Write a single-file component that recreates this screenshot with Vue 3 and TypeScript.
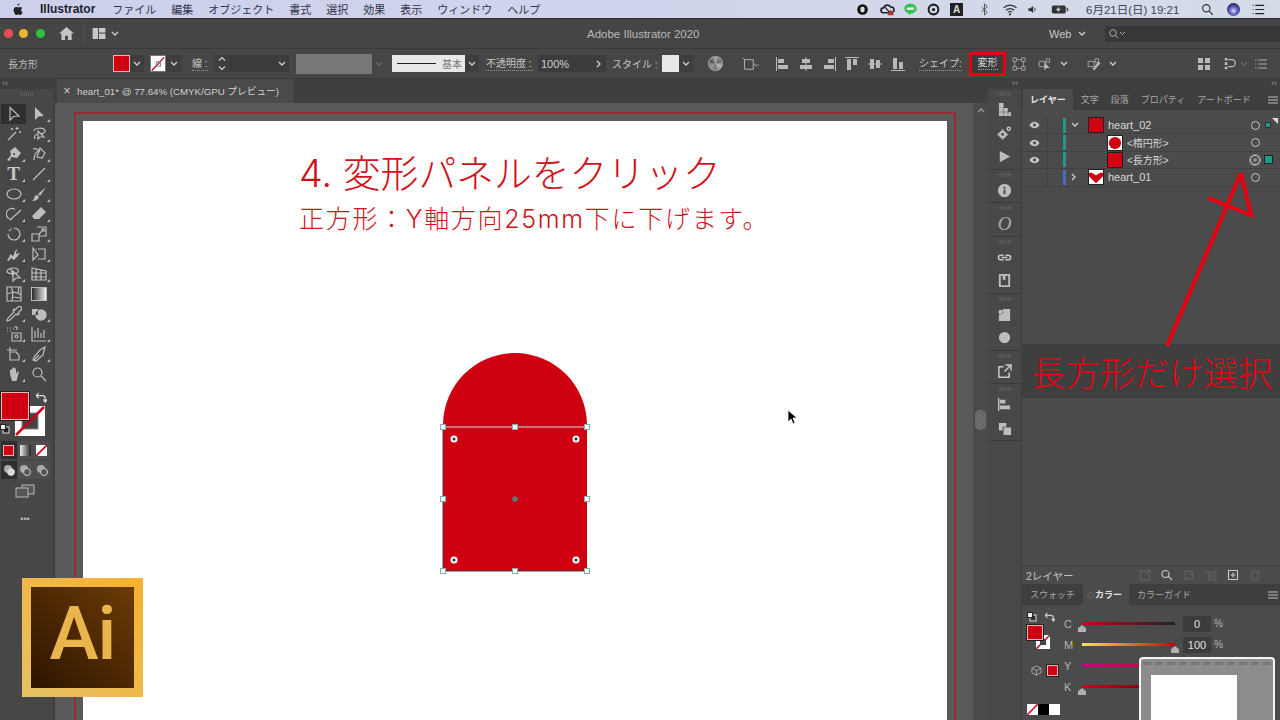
<template>
  <div class="screen">
    <header class="menubar">
      <svg class="apple" viewBox="0 0 14 16"><path d="M9.6 0.5c.1 1.4-1.2 3-2.7 2.9C6.700 2 8.100.6 9.600.5zM11.600 8.500c0-1.600 1.300-2.400 1.400-2.500-.8-1.100-2-1.300-2.500-1.300-1-.1-2 .6-2.600.6-.5 0-1.400-.6-2.300-.6C4.300 4.700 3.200 5.400 2.600 6.400 1.400 8.500 2.300 11.600 3.500 13.300c.6.800 1.300 1.800 2.200 1.700.9 0 1.200-.6 2.300-.6s1.400.6 2.300.6c1 0 1.600-.8 2.200-1.700.7-1 1-2 1-2-.1 0-1.900-.7-1.900-2.800z"/></svg>
      <b class="app-name">Illustrator</b>
      <nav class="menus">
        <span v-for="m in menus" :key="m">{{ m }}</span>
      </nav>
      <div class="status">
        <svg viewBox="0 0 16 16" class="st"><circle cx="8" cy="8" r="6.500" fill="#111"/><rect x="5.500" y="4.500" width="5" height="7" rx="2" fill="#ddd"/></svg>
        <svg viewBox="0 0 20 16" class="st wide"><path d="M5 12a3 3 0 0 1 0-6 5 5 0 0 1 9-1 3.500 3.500 0 0 1 1 7z" fill="none" stroke="#222" stroke-width="2"/><path d="M7 5l6 7" stroke="#222" stroke-width="1.500"/><path d="M14 8l4 7h-8z" fill="#c8302a"/></svg>
        <svg viewBox="0 0 16 16" class="st"><path d="M8 1c4 0 7.500 2.500 7.500 6 0 3.200-3 5.600-6.500 6l-2.500 2v-2C3.500 12.500.5 10.200.5 7 .5 3.500 4 1 8 1z" fill="#2fc14b"/><rect x="3.500" y="5.500" width="9" height="3" fill="#e8f7e8"/></svg>
        <svg viewBox="0 0 16 16" class="st"><circle cx="8" cy="8" r="6" fill="none" stroke="#222" stroke-width="2.500"/><circle cx="8" cy="8" r="2" fill="#222"/></svg>
        <span class="st-a">A</span>
        <svg viewBox="0 0 16 16" class="st dim"><path d="M8 1v14M8 1l3.500 3.500L4.500 11M8 15l3.500-3.500L4.500 5" fill="none" stroke="#555" stroke-width="1.200"/></svg>
        <svg viewBox="0 0 18 16" class="st wide-s"><path d="M1 6a11 11 0 0 1 16 0M4 9a7 7 0 0 1 10 0M6.500 11.500a3.500 3.500 0 0 1 5 0" fill="none" stroke="#333" stroke-width="1.500"/><circle cx="9" cy="14" r="1.300" fill="#333"/></svg>
        <svg viewBox="0 0 16 16" class="st small"><path d="M2 6h3l4-3v10l-4-3H2z" fill="#333"/><path d="M11 5.500a4 4 0 0 1 0 5" fill="none" stroke="#333" stroke-width="1.300"/></svg>
        <svg viewBox="0 0 22 14" class="st batt"><rect x="1" y="2" width="17" height="10" rx="2" fill="#333"/><rect x="19" y="5" width="2" height="4" fill="#555"/><path d="M10 3L6 8h3l-1 3 4-5H9z" fill="#ddd"/></svg>
        <span class="clock">6月21日(日) 19:21</span>
        <svg viewBox="0 0 16 16" class="st search"><circle cx="6.500" cy="6.500" r="4.500" fill="none" stroke="#333" stroke-width="1.400"/><path d="M10 10l4.500 4.500" stroke="#333" stroke-width="1.500"/></svg>
        <span class="siri"></span>
        <svg viewBox="0 0 16 16" class="st list"><path d="M4 3h11M4 8h11M4 13h11" stroke="#222" stroke-width="1.500"/><path d="M1 3h1M1 8h1M1 13h1" stroke="#222" stroke-width="1.500"/></svg>
      </div>
    </header>

    <div class="titlebar">
      <i class="light red"></i><i class="light yellow"></i><i class="light green"></i>
      <svg class="home" viewBox="0 0 16 14"><path d="M8 0L0 7h2.500v7h4V9.500h3V14h4V7H16z"/></svg>
      <span class="sep"></span>
      <svg class="layout" viewBox="0 0 14 12"><path d="M0 0h6v12H0zM7 0h7v5H7zM7 6h7v6H7z"/></svg>
      <svg class="chev ml-5" viewBox="0 0 8 6"><path d="M1 1l3 3 3-3"/></svg>
      <span class="doc-title">Adobe Illustrator 2020</span>
      <span class="web">Web</span>
      <svg class="chev ml-7" viewBox="0 0 8 6"><path d="M1 1l3 3 3-3"/></svg>
      <div class="search-box">
        <svg viewBox="0 0 18 12"><circle cx="5" cy="5" r="3.300" fill="none" stroke="#aaa"/><path d="M7.500 7.500L10 10M12 4l2.500 2.500L17 4" fill="none" stroke="#aaa"/></svg>
      </div>
    </div>

    <div class="controlbar">
      <span class="obj-name">長方形</span>
      <span class="swatch fill"></span><span class="cbox"><svg class="chev" viewBox="0 0 8 6"><path d="M1 1l3 3 3-3"/></svg></span>
      <span class="swatch none ml-6"><svg viewBox="0 0 16 16"><path d="M1 16L15 1" stroke="#c8001a" stroke-width="1.500"/><rect x="6" y="6" width="5" height="5" fill="none" stroke="#777"/></svg></span><span class="cbox wide"><svg class="chev" viewBox="0 0 8 6"><path d="M1 1l3 3 3-3"/></svg></span>
      <span class="lbl stroke-l ml-11">線 :</span>
      <span class="spin ml-6"><svg viewBox="0 0 10 16"><path d="M2 5l3-3 3 3M2 11l3 3 3-3" fill="none" stroke="#ccc" stroke-width="1.200"/></svg></span>
      <span class="field weight"><svg class="chev" viewBox="0 0 8 6"><path d="M1 1l3 3 3-3"/></svg></span>
      <span class="graybar ml-7"></span><span class="cbox faded"><svg class="chev" viewBox="0 0 8 6"><path d="M1 1l3 3 3-3"/></svg></span>
      <span class="stroke-preview ml-6"><i></i><em>基本</em></span><span class="cbox"><svg class="chev" viewBox="0 0 8 6"><path d="M1 1l3 3 3-3"/></svg></span>
      <span class="lbl opacity-l ml-7">不透明度 :</span>
      <span class="field opacity ml-5">100%</span><span class="cbox"><svg class="chev right" viewBox="0 0 6 8"><path d="M1 1l3 3-3 3"/></svg></span>
      <span class="style-l ml-6">スタイル :</span>
      <span class="swatch blank"></span><span class="cbox"><svg class="chev" viewBox="0 0 8 6"><path d="M1 1l3 3 3-3"/></svg></span>
      <span class="globe"></span>
      <svg class="ci select-i" viewBox="0 0 22 16"><path d="M3 3h10v11H3zM1 1l3 3M14 8l2.500 2.500L19 8" fill="none" stroke="#bbb"/></svg>
      <div class="aligns">
        <svg v-for="(a, i) in aligns" :key="i" class="ci" viewBox="0 0 14 14"><path :d="a"/></svg>
      </div>
      <span class="lbl shape-l">シェイプ:</span>
      <span class="transform-btn"><span>変形</span></span>
      <svg class="ci ml-6" viewBox="0 0 16 16"><path d="M1 1h4v4H1zM11 1h4v4h-4zM1 11h4v4H1zM11 11h4v4h-4zM5 3h6M5 13h6M3 5v6M13 5v6" fill="none" stroke="#aaa"/></svg>
      <svg class="ci w20 ml-11" viewBox="0 0 20 16"><path d="M1 5h7v6H1zM9 2h4v4H9z" fill="none" stroke="#aaa"/><path d="M7 6v9l2.500-2.500H13z" fill="#bbb"/></svg>
      <svg class="chev ml-3" viewBox="0 0 8 6"><path d="M1 1l3 3 3-3"/></svg>
      <svg class="ci w20 ml-18" viewBox="0 0 20 16"><path d="M1 5h7v6H1zM9 2h4v4H9z" fill="none" stroke="#aaa"/><path d="M6 14l7-9 2 2-7 8z" fill="#bbb"/></svg>
      <svg class="chev ml-3" viewBox="0 0 8 6"><path d="M1 1l3 3 3-3"/></svg>
      <svg class="ci ctrl-right" viewBox="0 0 14 14"><path d="M1 1h5v5H1zM8 1h5v5H8zM1 8h5v5H1zM8 8h5v5H8z" fill="#bbb"/></svg>
      <svg class="ci ml-12" viewBox="0 0 14 16"><path d="M1 1h3v3H1zM1 6h3v3H1zM1 11h3v3H1z" fill="#bbb"/><path d="M5 3h4a4 4 0 0 1 0 8H5" fill="none" stroke="#bbb" stroke-width="1.500"/></svg>
      <svg class="chev faint ml-3" viewBox="0 0 8 6"><path d="M1 1l3 3 3-3"/></svg>
      <svg class="ci ml-7 mini" viewBox="0 0 12 12"><path d="M3 2h9M3 6h9M3 10h9M0 2h1.500M0 6h1.500M0 10h1.500" stroke="#aaa" stroke-width="1.200"/></svg>
    </div>

    <div class="workspace">
      <aside class="tools">
        <div class="strip">‹‹</div>
        <div class="grip"></div>
        <div class="tool-grid">
          <div v-for="(t, i) in tools" :key="i" class="tool" :class="{ active: i === 0 }">
            <span v-if="t.grad" class="grad-icon"></span>
            <span v-else-if="t.txt" class="t-icon">{{ t.txt }}</span>
            <svg v-else viewBox="0 0 16 16"><path :d="t.d" :class="t.f ? 'solid' : 'line'"/></svg>
            <i v-if="t.m" class="more"></i>
          </div>
        </div>
        <div class="color-well">
          <span class="well-stroke"><svg viewBox="0 0 30 30"><rect x="7" y="7" width="16" height="16" fill="#444" stroke="#888"/><path d="M1 29L29 1" stroke="#c8001a" stroke-width="2.500"/></svg></span>
          <span class="well-fill"></span>
          <svg class="well-swap" viewBox="0 0 12 12"><path d="M1 4h6a3 3 0 0 1 3 3v3M8 8l2 3 2-3M3 1L0 4l3 3" fill="none" stroke="#ddd" stroke-width="1.300"/></svg>
          <svg class="well-default" viewBox="0 0 10 10"><rect x="3" y="3" width="6" height="6" fill="#222" stroke="#ddd"/><rect x="0.500" y="0.500" width="5" height="5" fill="#eee" stroke="#222"/></svg>
        </div>
        <div class="mode-row">
          <span class="m-cell on"><i class="m-red"></i></span>
          <span class="m-cell"><i class="m-grad"></i></span>
          <span class="m-cell"><i class="m-none"><svg viewBox="0 0 10 10"><path d="M0 10L10 0" stroke="#c8001a" stroke-width="1.500"/></svg></i></span>
        </div>
        <div class="mode-row draw">
          <span v-for="n in 3" :key="n" class="m-cell" :class="{ on: n === 1 }">
            <svg viewBox="0 0 12 12"><circle cx="5" cy="5" r="4" fill="#aaa"/><circle cx="8" cy="8" r="3.500" :fill="n === 1 ? '#ddd' : '#555'" stroke="#ccc"/></svg>
          </span>
        </div>
        <svg class="screen-mode" viewBox="0 0 20 14"><rect x="7" y="1" width="12" height="9" fill="#555" stroke="#bbb"/><rect x="1" y="4" width="12" height="9" fill="#555" stroke="#bbb"/></svg>
        <div class="dots">•••</div>
      </aside>

      <main class="doc">
        <div class="tabrow">
          <div class="tab"><span class="x">×</span>heart_01* @ 77.64% (CMYK/GPU プレビュー)</div>
        </div>
        <div class="canvas-wrap">
          <div class="canvas">
            <div class="bleed">
              <div class="artboard">
                <h1>4. 変形パネルをクリック</h1>
                <h2>正方形：Y軸方向25mm下に下げます。</h2>
                <svg class="arch" viewBox="0 0 154 224">
                  <path d="M3 73a72 72 0 0 1 144 0V219H3z" fill="#cf0012"/>
                  <path d="M3 75V219H147" fill="none" stroke="#3c4a48" stroke-width="1"/>
                  <path d="M3 75H147" stroke="#d9d9d9" stroke-width="1"/>
                  <g fill="#fff" stroke="#7fb0a8">
                    <rect v-for="(h, i) in handles" :key="i" :x="h[0] - 2.500" :y="h[1] - 2.500" width="5" height="5"/>
                  </g>
                  <g v-for="(c, i) in corners" :key="'c' + i">
                    <circle :cx="c[0]" :cy="c[1]" r="3.500" fill="#fff"/>
                    <circle :cx="c[0]" :cy="c[1]" r="1.500" fill="#333"/>
                  </g>
                  <circle cx="75" cy="147" r="2.800" fill="#5c7a70"/>
                </svg>
                <svg class="cursor" viewBox="0 0 10 16"><path d="M1 1v12l3-3 2 5 2-1-2-5h4z" fill="#000" stroke="#fff" stroke-width="0.800"/></svg>
              </div>
            </div>
          </div>
          <div class="scrollbar"><svg class="chev up" viewBox="0 0 8 6"><path d="M1 4l3-3 3 3"/></svg><i></i></div>
        </div>
      </main>

      <aside class="dock">
        <div class="strip right">‹‹</div>
        <div v-for="(g, i) in dockGroups" :key="i" class="dock-group">
          <div class="grip"></div>
          <div v-for="(ic, j) in g" :key="j" class="dock-icon">
            <span v-if="ic.txt" class="dock-o">{{ ic.txt }}</span>
            <svg v-else viewBox="0 0 16 16"><path :d="ic.d" :class="ic.f ? 'solid' : 'line wide-line'"/></svg>
          </div>
        </div>
      </aside>

      <section class="panels">
        <div class="strip right">››</div>
        <div class="ptabs">
          <span class="ptab on">レイヤー</span>
          <span class="ptab">文字</span>
          <span class="ptab">段落</span>
          <span class="ptab">プロパティ</span>
          <span class="ptab">アートボード</span>
          <svg class="burger" viewBox="0 0 10 8"><path d="M0 1h10M0 4h10M0 7h10" stroke="#bbb"/></svg>
        </div>
        <div class="layers">
          <div v-for="l in layers" :key="l.name" class="row">
            <span class="eye"><svg viewBox="0 0 12 8"><path d="M0.500 4C2 1.500 4 .5 6 .5s4 1 5.500 3.500C10 6.500 8 7.500 6 7.500S2 6.500.5 4z" fill="#c4c4c4"/><circle cx="6" cy="4" r="1.600" fill="#444"/></svg></span>
            <span class="lockcol"></span>
            <span class="tag" :class="l.tag"></span>
            <span class="twirl">
              <svg v-if="l.open === true" class="chev" viewBox="0 0 8 6"><path d="M1 1l3 3 3-3"/></svg>
              <svg v-else-if="l.open === false" class="chev right" viewBox="0 0 6 8"><path d="M1 1l3 3-3 3"/></svg>
            </span>
            <span class="thumb" :class="{ sub: l.sub }">
              <svg viewBox="0 0 16 16">
                <rect width="16" height="16" :fill="l.kind === 'rect' ? '#cf0012' : '#fff'"/>
                <circle v-if="l.kind === 'circle'" cx="8" cy="8" r="7" fill="#cf0012"/>
                <path v-if="l.kind === 'heart'" d="M8 15L0 7V3h3l5 3 5-3h3v4z" fill="#cf0012"/>
              </svg>
            </span>
            <span class="lname" :class="{ sub: l.sub }">{{ l.name }}</span>
            <span class="target" :class="{ hit: l.hit }"><i></i></span>
            <span class="sel" :class="{ big: l.hit, small: l.open === true }"></span>
          </div>
          <i class="corner"></i>
        </div>
        <div class="layers-foot">
          <span class="lcount">2レイヤー</span>
          <svg v-for="(f, i) in footIcons" :key="i" viewBox="0 0 12 12" :class="{ lit: f.lit }"><path :d="f.d" fill="none" stroke="currentColor" stroke-width="1.100"/></svg>
        </div>
        <div class="ptabs color-tabs">
          <span class="ptab">スウォッチ</span>
          <span class="ptab on"><small>◇</small>カラー</span>
          <span class="ptab">カラーガイド</span>
          <svg class="burger" viewBox="0 0 10 8"><path d="M0 1h10M0 4h10M0 7h10" stroke="#bbb"/></svg>
        </div>
        <div class="color-body">
          <div class="color-left">
            <div class="swap-icons">
              <svg viewBox="0 0 10 10"><rect x="3" y="3" width="6" height="6" fill="#333" stroke="#ddd"/><rect x="0.500" y="0.500" width="5" height="5" fill="#eee" stroke="#222"/></svg>
              <svg viewBox="0 0 12 12"><path d="M1 4h6a3 3 0 0 1 3 3v3M8 8l2 3 2-3M3 1L0 4l3 3" fill="none" stroke="#ccc" stroke-width="1.300"/></svg>
            </div>
            <div class="mini-well"><span class="mw-stroke"><svg viewBox="0 0 14 14"><path d="M0 14L14 0" stroke="#c8001a" stroke-width="1.500"/><rect x="4" y="4" width="6" height="6" fill="#444"/></svg></span><span class="mw-fill"></span></div>
            <div class="gamut">
              <svg viewBox="0 0 12 12"><path d="M6 1l5 2.500v5L6 11 1 8.500v-5zM1 3.500L6 6l5-2.500M6 6v5" fill="none" stroke="#aaa"/></svg>
              <span class="gamut-swatch"></span>
            </div>
            <div class="quick"><i class="qn"><svg viewBox="0 0 11 11"><path d="M0 11L11 0" stroke="#c8001a" stroke-width="1.500"/></svg></i><i class="qb"></i><i class="qw"></i></div>
          </div>
          <div class="sliders">
            <div v-for="s in sliders" :key="s.k" class="slider">
              <span class="s-key">{{ s.k }}</span>
              <span class="track" :class="s.k"><i v-if="s.pos !== null" class="knob" :class="{ end: s.pos === 100 }"></i></span>
              <template v-if="s.val !== null">
                <span class="s-val">{{ s.val }}</span><span class="pct">%</span>
              </template>
            </div>
          </div>
        </div>
      </section>
    </div>

    <!-- overlays added over the recording -->
    <div class="ai-logo"><span>Ai</span></div>
    <div class="callout">長方形だけ選択</div>
    <svg class="arrow" viewBox="0 0 120 180"><path d="M4 176L78 3M78 3L88 45L45 28" fill="none" stroke="#e60012" stroke-width="4"/></svg>
    <div class="navigator">
      <div class="nav-top"></div>
      <div class="nav-board"></div>
    </div>
  </div>
</template>

<script setup lang="ts">
interface Tool {
  d?: string
  f?: boolean
  m?: boolean
  grad?: boolean
  txt?: string
}

const menus = ['ファイル', '編集', 'オブジェクト', '書式', '選択', '効果', '表示', 'ウィンドウ', 'ヘルプ']

const aligns = [
  'M0 0h1v14H0zM2 2h6v4H2zM2 8h10v4H2z',
  'M6.500 0h1v14h-1zM3 2h8v4H3zM1 8h12v4H1z',
  'M13 0h1v14h-1zM6 2h6v4H6zM2 8h10v4H2z',
  'M0 0h14v1H0zM2 2h4v11H2zM8 2h4v6H8z',
  'M0 6.500h14v1H0zM2 2h4v10H2zM8 3h4v8H8z',
  'M0 13h14v1H0zM2 1h4v11H2zM8 5h4v7H8z',
]

const tools: Tool[] = [
  { d: 'M4 1.500V14L7.500 10.500 13 10z' },
  { d: 'M4 1V14L7.500 10.500 13 10z', f: true, m: true },
  { d: 'M2 14L10 6M11 1v3M9.500 2.500h3M14 5v2M13 6h2M6 2v2M5 3h2' },
  { d: 'M3 5c0-3 9-4 11-1 1 2-2 4-5 4M6 8c-2 1-3 3-2 5M7 5v8l2-2 4 0z', m: true },
  { d: 'M9 1L15 7 11 12 5 11 4 15 1 14 5 9 4 5zM8 7a1 1 0 1 0 .1 0z', f: true, m: true },
  { d: 'M3 14c0-4 1-7 4-9M9 2L14 7 11 12 6 11zM2 3c3-1 5 0 7 3', m: true },
  { txt: 'T', m: true },
  { d: 'M2 14L14 2', m: true },
  { d: 'M1 8a7 5 0 1 0 14 0a7 5 0 1 0-14 0z', m: true },
  { d: 'M15 1L7 8 9 10 15 1zM6 9c-2 0-3 2-3 4l-2 2c3 0 6-1 7-4z', f: true, m: true },
  { d: 'M9 3.500a5.500 5.500 0 1 0-3 10M4 14L15 4', m: true },
  { d: 'M10 1L15 6 8 13 3 13 1 10zM3.500 7.500L8 12', f: true, m: true },
  { d: 'M8 2a6 6 0 1 1-6 6M3 5l1.500-1.500M5 3l1-.5', m: true },
  { d: 'M1 8h7v7H1zM6 1h9v9h-7M8 8l5-5M10 3h3v3', m: true },
  { d: 'M1 14c2-2 3-4 3-6l3 2c2-2 1-5 4-7l-1 5 4-1-3 4-3 3-3-2-2 3z', f: true, m: true },
  { d: 'M2 2v12L7 9zM7 3h7v10H7M5 3h1M14 3v10', m: true },
  { d: 'M1 6c0-3 4-4 7-4s5 2 4 4-8 3-11 0zM5 3l2 8M7 5v10l3-3h4z', m: true },
  { d: 'M1 2l14 3v9H1zM5 3v11M10 4v10M1 7h14M1 11h14', m: true },
  { d: 'M1 1h14v14H1zM5 1l2 5-6 2M7 6l5 1 1-6M12 7l3 2M7 6l-1 9M6 11l9 1' },
  { grad: true },
  { d: 'M12 1a2 2 0 0 1 3 3l-3 3 1 1-2 1-1-1-6 6-3 1 1-3 6-6-1-1 1-2 1 1z', m: true },
  { d: 'M1 3h6v6H1zM6 5a4 4 0 1 0 8 8a4 4 0 1 0-8-8z', f: true, m: true },
  { d: 'M1 2h1M4 2h1M1 5h1M4 5h1M7 3h1M8 1h3v3M6 7h9v8H6zM10.500 9a1.500 1.500 0 1 0 .1 0z', m: true },
  { d: 'M1 1v14h14M4 12V5M7 12V2M10 12V7M13 12V4', m: true },
  { d: 'M1 4h10M4 1v13M4 6h6l3 3v5H4z', m: true },
  { d: 'M14 1l-2 8-7 6-3-1 1-3 6-7zM3 14l5-5', m: true },
  { d: 'M4 8V4h1.500v3V2.500H7V7V1.500h1.500V7V2.500H10V8l1.500-2.500H13L10.500 15H6z', f: true, m: true },
  { d: 'M2 6.500a4.500 4.500 0 1 0 9 0a4.500 4.500 0 1 0-9 0zM10 10l5 5' },
]

const dockGroups: Tool[][] = [
  [
    { d: 'M2 1h5v5H2zM2 6.500h5v4H2zM2 11h5v4H2zM7.500 6.500h4v4h-4zM7.500 11h4v4h-4zM12 11h3v4h-3z', f: true },
    { d: 'M2 9a4 4 0 1 0 8 0a4 4 0 1 0-8 0zM4.500 9a1.500 1.500 0 1 0 3 0a1.500 1.500 0 1 0-3 0zM5 3.500h2V5H5zM5 13h2v1.500H5zM.5 8H2v2H.5zM10 8h1.500v2H10zM10 3a2.500 2.500 0 1 0 5 0a2.500 2.500 0 1 0-5 0zM11.500 3a1 1 0 1 0 2 0a1 1 0 1 0-2 0z', f: true },
    { d: 'M3 2l11 6-11 6z', f: true },
  ],
  [{ d: 'M8 1a7 7 0 1 0 .1 0zM7 4v2h2V4zM7 7v5h2V7z', f: true }],
  [{ txt: 'O' }],
  [
    { d: 'M7 5.500H4a2.500 2.500 0 0 0 0 5h3M9 5.500h3a2.500 2.500 0 0 1 0 5H9M5 8h6' },
    { d: 'M2 1h12v14H2zM4 3v10h8V3h-3v5l-1.500-1L6 8V3z', f: true },
  ],
  [
    { d: 'M6 2h8v13H2V8a4 4 0 0 0 4-6zM4 3a2.500 2.500 0 1 0 .1 0z', f: true },
    { d: 'M8 2a6 6 0 1 0 .1 0z', f: true },
  ],
  [{ d: 'M7 3H2v11h11V9M9 1h6v6M15 1L8 8' }],
  [
    { d: 'M1 1h1.500v14H1zM3 3h6v4H3zM3 9h11v4H3z', f: true },
    { d: 'M2 2h8v4H6v4H2zM7 7h8v8H7z', f: true },
  ],
]

const layers = [
  { name: 'heart_02', tag: 'teal', open: true, kind: 'rect', sub: false, hit: false },
  { name: '<楕円形>', tag: 'teal', open: null, kind: 'circle', sub: true, hit: false },
  { name: '<長方形>', tag: 'teal', open: null, kind: 'rect', sub: true, hit: true },
  { name: 'heart_01', tag: 'blue', open: false, kind: 'heart', sub: false, hit: false },
]

const footIcons = [
  { d: 'M7 2H1.500v9h9V6M7 5l4-4M8 1h3v3' },
  { d: 'M1 5a3.500 3.500 0 1 0 7 0a3.500 3.500 0 1 0-7 0zM7.500 7.500L11 11', lit: true },
  { d: 'M2 2h8v8H2zM5 5h5' },
  { d: 'M4 3h7v8H4zM0 3h2M1 2v2M7.500 5v4M5.500 7h4' },
  { d: 'M1.500 1.500h9v9h-9zM6 3.500v5M3.500 6h5', lit: true },
  { d: 'M3 3h6v8H3zM1.500 3h9M5 1h2' },
]

const sliders = [
  { k: 'C', pos: 0, val: '0' },
  { k: 'M', pos: 100, val: '100' },
  { k: 'Y', pos: null, val: null },
  { k: 'K', pos: 0, val: null },
]

// handle and widget spots, in the arch svg's coordinates
const handles = [
  [3, 75], [75, 75], [147, 75],
  [3, 147], [147, 147],
  [3, 219], [75, 219], [147, 219],
]
const corners = [
  [14, 87], [136, 87],
  [14, 208], [136, 208],
]
</script>

<style>
html, body {
  margin: 0;
  background: #4a4a4a;
}
</style>

<style scoped>
.screen {
  position: relative;
  width: 1280px;
  height: 720px;
  overflow: hidden;
  display: flex;
  flex-direction: column;
  background: #484848;
  color: #c4c4c4;
  font-family: "Liberation Sans", "Noto Sans CJK JP", sans-serif;
  font-size: 10px;
}

.ml-3 { margin-left: 3px; }
.ml-5 { margin-left: 5px; }
.ml-6 { margin-left: 6px; }
.ml-7 { margin-left: 7px; }
.ml-11 { margin-left: 11px; }
.ml-12 { margin-left: 12px; }
.ml-18 { margin-left: 18px; }

.chev {
  width: 8px;
  height: 6px;
  flex: none;
  fill: none;
  stroke: #d0d0d0;
  stroke-width: 1.300;
}
.chev.right { width: 6px; height: 8px; }
.chev.faint { stroke: #666; }

/* menu bar */
.menubar {
  height: 18px;
  flex: none;
  display: flex;
  align-items: center;
  padding-left: 12px;
  background: linear-gradient(90deg, #ccd0ea, #d0d4ec 50%, #d5dce8);
  border-bottom: 1px solid #2c2c2c;
  color: #33344a;
  font-size: 11px;
}
.apple { width: 11px; height: 13px; fill: #222; flex: none; }
.app-name { margin-left: 17px; color: #1d1d2c; font-size: 12px; }
.menus { display: flex; gap: 15px; margin-left: 17px; }
.status { margin-left: auto; display: flex; align-items: center; padding-right: 15px; }
.st { width: 13px; height: 13px; flex: none; margin-right: 10px; }
.st.wide { width: 17px; margin-right: 8px; }
.st-a {
  width: 13px;
  height: 13px;
  background: #222;
  color: #ddd;
  text-align: center;
  line-height: 13px;
  font-size: 10px;
  font-weight: 700;
  margin-right: 15px;
}
.st.dim { margin-right: 11px; }
.st.wide-s { width: 16px; margin-right: 9px; }
.st.small { width: 11px; margin-right: 13px; }
.st.batt { width: 18px; margin-right: 17px; }
.clock { font-size: 11.500px; width: 100px; white-space: nowrap; color: #40415a; margin-right: 15px; }
.st.search { margin-right: 13px; }
.siri {
  width: 13px;
  height: 13px;
  border-radius: 50%;
  background: radial-gradient(circle at 50% 60%, #d8e4f8 0, #6a6ad0 35%, #1c2350 75%);
  margin-right: 12px;
}
.st.list { margin-right: 0; }

/* title bar */
.titlebar {
  height: 29px;
  flex: none;
  display: flex;
  align-items: center;
  padding-left: 4px;
  background: #454545;
  border-bottom: 1px solid #3a3a3a;
}
.light { width: 7px; height: 7px; border-radius: 50%; flex: none; border: 1px solid transparent; }
.light.red { background: #f0565a; box-shadow: inset 0 0 0 2px #e8474b; }
.light.yellow { background: #efb430; margin-left: 6px; }
.light.green { background: #2fc23f; margin-left: 8px; }
.home { width: 15px; height: 13px; fill: #c4c4c4; margin-left: 14px; flex: none; }
.sep { width: 1px; height: 22px; background: #4f4f4f; margin-left: 10px; flex: none; }
.layout { width: 14px; height: 11px; fill: #c8c8c8; margin-left: 7px; flex: none; }
.doc-title { margin-left: 468px; width: 114px; white-space: nowrap; font-size: 11.500px; color: #b8b8b8; }
.web { margin-left: 348px; font-size: 11px; color: #c8c8c8; width: 22px; }
.search-box {
  margin-left: 19px;
  flex: 1;
  height: 16px;
  background: #383838;
  border-radius: 2px 0 0 2px;
  display: flex;
  align-items: center;
  padding-left: 3px;
}
.search-box svg { width: 18px; height: 12px; }

/* control bar */
.controlbar {
  height: 29px;
  flex: none;
  display: flex;
  align-items: center;
  padding-left: 8px;
  background: #464646;
  border-bottom: 1px solid #3a3a3a;
  font-size: 10px;
}
.obj-name { width: 105px; color: #bcbcbc; }
.swatch { width: 17px; height: 17px; box-sizing: border-box; flex: none; }
.swatch.fill { background: #cf0012; border: 1px solid #f0b0b0; }
.swatch.none { background: #fff; width: 16px; border: 1px solid #777; }
.swatch.none svg { display: block; width: 100%; height: 100%; }
.swatch.blank { background: #e8e8e8; }
.cbox {
  width: 14px;
  height: 17px;
  flex: none;
  background: #3e3e3e;
  display: flex;
  align-items: center;
  justify-content: center;
}
.cbox.wide { width: 15px; }
.cbox.faded { background: transparent; opacity: 0.25; }
.lbl {
  flex: none;
  color: #c8c8c8;
  border-bottom: 1px dotted #999;
  line-height: 13px;
}
.stroke-l { width: 16px; white-space: nowrap; }
.spin { width: 15px; height: 17px; background: #3e3e3e; display: flex; justify-content: center; flex: none; }
.spin svg { width: 10px; height: 17px; }
.field {
  height: 17px;
  flex: none;
  background: #3c3c3c;
  display: flex;
  align-items: center;
  box-sizing: border-box;
}
.field.weight { width: 60px; justify-content: flex-end; padding-right: 3px; }
.field.opacity { width: 54px; padding-left: 3px; font-size: 11px; color: #d0d0d0; }
.graybar { width: 76px; height: 20px; background: #777; flex: none; }
.stroke-preview {
  width: 73px;
  height: 17px;
  flex: none;
  background: #e8e8e8;
  display: flex;
  align-items: center;
  padding: 0 3px 0 5px;
  box-sizing: border-box;
}
.stroke-preview i { width: 39px; height: 1px; background: #222; }
.stroke-preview em { margin-left: auto; font-style: normal; color: #777; font-size: 10px; }
.opacity-l { width: 47px; white-space: nowrap; }
.style-l { width: 50px; white-space: nowrap; flex: none; }
.globe {
  width: 15px;
  height: 15px;
  flex: none;
  border-radius: 50%;
  margin-left: 15px;
  background: conic-gradient(#aaa, #666, #bbb, #777, #999, #555, #aaa);
  box-shadow: inset 0 0 0 1px #999;
}
.ci { width: 14px; height: 14px; flex: none; fill: #b8b8b8; }
.w20 { width: 20px; }
.select-i { width: 21px; margin-left: 18px; }
.aligns { display: flex; gap: 9px; margin-left: 14px; }
.shape-l { margin-left: 14px; width: 43px; white-space: nowrap; }
.transform-btn {
  width: 37px;
  height: 24px;
  box-sizing: border-box;
  border: 3px solid #e50012;
  margin-left: 7px;
  flex: none;
  display: flex;
  align-items: center;
  justify-content: center;
  color: #d8d8d8;
  background: #3c3c3c;
}
.transform-btn span { border-bottom: 1px dotted #aaa; line-height: 12px; }
.ctrl-right { margin-left: 80px; }
.mini { width: 12px; }

/* workspace */
.workspace { flex: 1; min-height: 0; display: flex; }
.strip {
  height: 10px;
  line-height: 9px;
  font-size: 9px;
  color: #999;
  padding-left: 2px;
  background: #3f3f3f;
}
.strip.right { text-align: right; padding: 0 3px 0 0; }
.grip {
  height: 4px;
  margin: 3px auto 2px;
  width: 14px;
  background: repeating-linear-gradient(90deg, #5e5e5e 0 1px, transparent 1px 2px);
}

.tools {
  width: 55px;
  flex: none;
  background: #474747;
  border-right: 2px solid #3f3f3f;
  box-sizing: border-box;
}
.tool-grid {
  display: grid;
  grid-template-columns: 25px 25px;
  grid-auto-rows: 20px;
  padding-top: 6px;
  padding-left: 1px;
}
.tool { position: relative; display: flex; align-items: center; justify-content: center; }
.tool.active { background: #2f2f2f; }
.tool svg { width: 16px; height: 16px; }
.line { fill: none; stroke: #bdbdbd; stroke-width: 1.200; }
.wide-line { stroke-width: 1.600; stroke: #c8c8c8; }
.solid { fill: #bdbdbd; fill-rule: evenodd; }
.more {
  position: absolute;
  right: 1px;
  bottom: 2px;
  border-left: 3px solid transparent;
  border-bottom: 3px solid #c4c4c4;
}
.t-icon { font-family: "Liberation Serif", serif; font-weight: 700; font-size: 19px; color: #c8c8c8; line-height: 16px; }
.grad-icon { width: 14px; height: 12px; background: linear-gradient(90deg, #2a2a2a, #eee); border: 1px solid #bbb; }

.color-well { position: relative; height: 48px; margin-top: 8px; }
.well-fill {
  position: absolute;
  left: 1px;
  top: 0;
  width: 28px;
  height: 28px;
  box-sizing: border-box;
  background: #cf0012;
  border: 1px solid #f4b4b4;
  outline: 1px solid #222;
}
.well-stroke {
  position: absolute;
  left: 15px;
  top: 14px;
  width: 30px;
  height: 30px;
  background: #fff;
}
.well-stroke svg { display: block; width: 30px; height: 30px; }
.well-swap { position: absolute; left: 36px; top: 0; width: 11px; height: 11px; }
.well-default { position: absolute; left: 0; top: 32px; width: 10px; height: 10px; }
.mode-row { display: flex; gap: 1px; padding-left: 1px; margin-top: 1px; }
.mode-row.draw { margin-top: 2px; }
.m-cell {
  width: 15.500px;
  height: 18px;
  display: flex;
  align-items: center;
  justify-content: center;
  background: #4f4f4f;
}
.m-cell.on { background: #2f2f2f; }
.m-cell svg { width: 12px; height: 12px; }
.m-red { width: 9px; height: 9px; background: #cf0012; border: 1px solid #f0b0b0; }
.m-grad { width: 11px; height: 11px; background: linear-gradient(90deg, #eee, #222); }
.m-none { width: 11px; height: 11px; background: #fff; display: block; }
.m-none svg { display: block; width: 11px; height: 11px; }
.screen-mode { display: block; width: 20px; height: 14px; margin: 5px 0 0 15px; }
.dots { text-align: center; color: #bbb; font-size: 9px; margin-top: 16px; letter-spacing: 0; width: 50px; }

.doc { flex: 1; min-width: 0; display: flex; flex-direction: column; }
.tabrow { height: 24px; flex: none; background: #3f3f3f; display: flex; padding-left: 2px; }
.tab {
  width: 236px;
  background: #4a4a4a;
  display: flex;
  align-items: center;
  font-size: 9.700px;
  color: #d0d0d0;
  white-space: nowrap;
}
.x { width: 20px; text-align: center; font-size: 12px; flex: none; }
.canvas-wrap { flex: 1; min-height: 0; display: flex; }
.canvas {
  flex: 1;
  min-width: 0;
  background: #5a5a5a;
  padding: 10px 18px 0 20px;
  display: flex;
}
.bleed {
  flex: 1;
  min-width: 0;
  display: flex;
  padding: 7px 7px 0 7px;
  border: 1px solid #a8252d;
  border-bottom: none;
  box-shadow: 0 0 0 1px #8a3036;
}
.artboard {
  position: relative;
  flex: 1;
  min-width: 0;
  background: #fff;
  padding-left: 216px;
  color: #d0121b;
  font-family: Inter, "Noto Sans CJK JP", sans-serif;
  font-weight: 300;
}
.artboard h1 {
  margin: 31px 0 0;
  font-size: 37.800px;
  line-height: 42px;
  font-weight: 300;
  white-space: nowrap;
}
.artboard h2 {
  margin: 10px 0 0;
  font-size: 25px;
  line-height: 30px;
  font-weight: 300;
  letter-spacing: 1.700px;
  white-space: nowrap;
}
.arch {
  position: absolute;
  left: 357px;
  top: 231px;
  width: 154px;
  height: 224px;
}
.cursor { position: absolute; left: 704px; top: 288px; width: 10px; height: 16px; }
.scrollbar {
  width: 15px;
  flex: none;
  background: #4b4b4b;
  display: flex;
  flex-direction: column;
  align-items: center;
  padding-top: 5px;
  box-sizing: border-box;
}
.chev.up { stroke: #999; }
.scrollbar i {
  margin-top: 296px;
  width: 11px;
  height: 20px;
  border-radius: 5px;
  background: #6a6a6a;
}

.dock {
  width: 34px;
  flex: none;
  background: #484848;
  border-right: 1px solid #3c3c3c;
  box-sizing: border-box;
}
.dock-group { border-bottom: 1px solid #3b3b3b; }
.dock-icon { height: 23.500px; display: flex; align-items: center; justify-content: center; }
.dock-icon svg { width: 15px; height: 15px; }
.dock-o { font-family: "Liberation Serif", serif; font-style: italic; font-size: 19px; color: #aaa; }

.panels { width: 258px; flex: none; display: flex; flex-direction: column; background: #4b4b4b; position: relative; }
.ptabs {
  height: 21px;
  flex: none;
  display: flex;
  align-items: stretch;
  background: #3e3e3e;
  padding-left: 1px;
  position: relative;
  font-size: 9px;
  color: #a8a8a8;
}
.ptab { display: flex; align-items: center; padding: 0 6px; white-space: nowrap; }
.ptab.on { background: #4b4b4b; color: #e4e4e4; font-weight: 700; padding: 0 7px; margin-right: 2px; }
.burger { position: absolute; right: 2px; top: 7px; width: 10px; height: 8px; }

.layers { flex: 1; padding-top: 7px; position: relative; }
.row {
  height: 17.400px;
  display: flex;
  align-items: center;
  border-bottom: 1px solid #424242;
  box-sizing: border-box;
}
.eye { width: 26px; display: flex; justify-content: center; flex: none; border-right: 1px solid #424242; height: 100%; align-items: center; box-sizing: border-box; }
.eye svg { width: 11px; height: 8px; }
.row:last-of-type .eye svg { visibility: hidden; }
.lockcol { width: 15px; flex: none; }
.tag { width: 3px; height: 15px; flex: none; }
.tag.teal { background: #1f9a85; }
.tag.blue { background: #4a6ac8; }
.twirl { width: 23px; display: flex; align-items: center; padding-left: 5px; box-sizing: border-box; flex: none; }
.thumb { width: 14px; height: 14px; flex: none; outline: 1px solid #222; }
.thumb svg { display: block; width: 100%; height: 100%; }
.thumb.sub { margin-left: 19px; }
.lname { margin-left: 5px; font-size: 11px; color: #d8d8d8; width: 120px; }
.lname.sub { font-size: 10px; margin-left: 5px; width: 100px; }
.target {
  width: 7px;
  height: 7px;
  border: 1px solid #c4c4c4;
  border-radius: 50%;
  flex: none;
  display: flex;
  align-items: center;
  justify-content: center;
  margin-left: auto;
}
.target.hit { width: 8px; height: 8px; box-shadow: 0 0 0 1px #8c8c8c; }
.target.hit i { width: 4px; height: 4px; border-radius: 50%; background: #8c8c8c; }
.sel { width: 7px; height: 7px; margin: 0 8px 0 5px; flex: none; }
.sel.small { background: #1f9a85; width: 4px; height: 4px; margin: 0 10px 0 6px; box-shadow: 0 0 0 1px #333; }
.sel.big { background: #1f9a85; box-shadow: 0 0 0 1px #222; }
.corner {
  position: absolute;
  right: 2px;
  top: 8px;
  border-left: 6px solid transparent;
  border-top: 6px solid #ddd;
}

.layers-foot {
  height: 19px;
  flex: none;
  display: flex;
  align-items: center;
  gap: 10px;
  padding-right: 19px;
  border-top: 1px solid #3e3e3e;
  box-sizing: border-box;
  color: #646464;
}
.layers-foot svg { width: 12px; height: 12px; }
.layers-foot .lit { color: #c8c8c8; }
.lcount { margin: 0 auto 0 4px; font-size: 10.500px; color: #c4c4c4; }

.color-tabs { height: 21px; }
.color-tabs .ptab { padding: 0 8px; }
.color-tabs .ptab:first-child { padding-left: 7px; }
.color-tabs .ptab.on { padding: 0 7px 0 4px; margin-right: 0; }
.color-tabs .ptab.on small { font-weight: 400; font-size: 7px; color: #aaa; margin-right: 1px; }
.color-body { flex: none; height: 115px; display: flex; }
.color-left { width: 42px; flex: none; padding: 7px 0 0 5px; box-sizing: border-box; }
.swap-icons { display: flex; gap: 8px; }
.swap-icons svg { width: 10px; height: 10px; }
.mini-well { position: relative; height: 25px; margin-top: 3px; }
.mw-fill {
  position: absolute;
  left: 0;
  top: 0;
  width: 16px;
  height: 15px;
  background: #cf0012;
  box-sizing: border-box;
  border: 1px solid #f0b0b0;
  outline: 1px solid #222;
}
.mw-stroke { position: absolute; left: 9px; top: 10px; width: 14px; height: 14px; background: #fff; }
.mw-stroke svg { display: block; }
.gamut { display: flex; align-items: center; gap: 5px; margin: 15px 0 0 4px; }
.gamut svg { width: 11px; height: 11px; }
.gamut-swatch { width: 9px; height: 9px; background: #cf0012; border: 1px solid #f0b0b0; outline: 1px solid #222; }
.quick { display: flex; margin-top: 28px; width: 33px; height: 11px; }
.quick i { width: 11px; height: 11px; display: block; }
.qn { background: #fff; }
.qn svg { display: block; width: 11px; height: 11px; }
.qb { background: #000; }
.qw { background: #fff; }

.sliders { flex: 1; padding-top: 8px; }
.slider { height: 21px; display: flex; align-items: center; }
.s-key { width: 18px; font-size: 11px; color: #b4b4b4; flex: none; }
.track { position: relative; width: 93px; height: 3px; flex: none; }
.track.C { background: linear-gradient(90deg, #d0001a, #222); }
.track.M { background: linear-gradient(90deg, #f2ea3c, #cf0012); }
.track.Y { background: linear-gradient(90deg, #c8007a, #c8101a); width: 110px; }
.track.K { background: linear-gradient(90deg, #d0001a, #400006); width: 110px; }
.knob {
  position: absolute;
  left: -4px;
  top: 3px;
  width: 8px;
  height: 7px;
  background: #b0b0b0;
  clip-path: polygon(50% 0, 100% 45%, 100% 100%, 0 100%, 0 45%);
}
.knob.end { left: auto; right: -4px; }
.s-val {
  margin-left: 8px;
  width: 28px;
  height: 16px;
  line-height: 16px;
  background: #3c3c3c;
  font-size: 11px;
  color: #e0e0e0;
  text-align: center;
  flex: none;
}
.pct { margin-left: 3px; font-size: 10px; color: #b4b4b4; }

/* overlays */
.ai-logo {
  position: absolute;
  left: 22px;
  top: 578px;
  width: 121px;
  height: 119px;
  box-sizing: border-box;
  border: 9px solid #ecb64a;
  border-image: linear-gradient(45deg, #e6c063, #f6b232) 1;
  background: linear-gradient(45deg, #2e1500, #6b3b05);
  display: flex;
  align-items: center;
  justify-content: center;
}
.ai-logo span {
  font-family: Roboto, "Liberation Sans", sans-serif;
  font-weight: 500;
  font-size: 74px;
  line-height: 80px;
  margin-top: -7px;
  color: #eab54d;
  letter-spacing: -1px;
}
.callout {
  position: absolute;
  left: 1022px;
  top: 344px;
  width: 258px;
  height: 54px;
  padding-left: 9px;
  box-sizing: border-box;
  background: #3f3f3f;
  color: #e60012;
  font-family: "Noto Sans CJK JP", sans-serif;
  font-weight: 300;
  font-size: 34.500px;
  line-height: 54px;
  white-space: nowrap;
}
.arrow { position: absolute; left: 1163px; top: 170px; width: 120px; height: 180px; }
.navigator {
  position: absolute;
  left: 1139px;
  top: 657px;
  width: 136px;
  height: 70px;
  box-sizing: border-box;
  border: 2px solid #f4f4f4;
  border-radius: 4px;
  background: #8c8c8c;
}
.nav-top { height: 3px; margin: 3px 2px; background: repeating-linear-gradient(90deg, #777 0 8px, #8c8c8c 8px 12px); }
.nav-board { position: absolute; left: 10px; top: 16px; width: 86px; height: 60px; background: #fff; }
</style>
